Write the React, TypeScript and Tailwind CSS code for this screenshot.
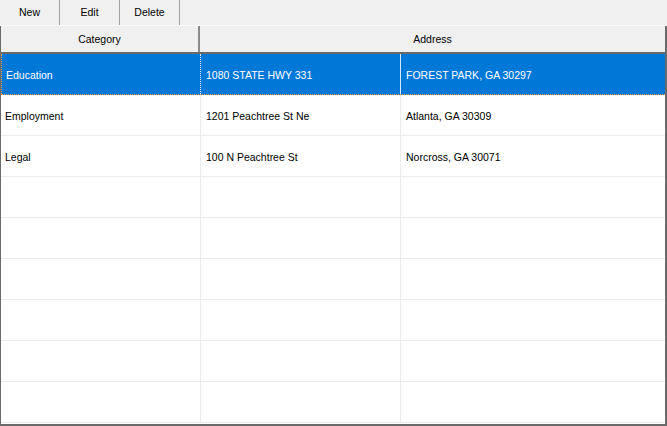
import React from 'react';

const rows = [
  { category: 'Education', street: '1080 STATE HWY 331', city: 'FOREST PARK, GA 30297' },
  { category: 'Employment', street: '1201 Peachtree St Ne', city: 'Atlanta, GA 30309' },
  { category: 'Legal', street: '100 N Peachtree St', city: 'Norcross, GA 30071' },
  null,
  null,
  null,
  null,
  null,
  null,
];

const App = () => {
  return (
    <div
      className="w-[667px] h-[426px] bg-[#f0f0f0] flex flex-col overflow-hidden text-[10.5px] text-black"
      style={{ fontFamily: 'Tahoma, "Liberation Sans", Arial, sans-serif' }}
    >
      <div className="flex h-[26px] shrink-0 border-b border-[#fafafa]">
        {['New', 'Edit', 'Delete'].map((label) => (
          <button
            key={label}
            className="w-[60px] h-full flex items-center justify-center pt-px bg-[#f0f0f0] border-r border-[#a0a0a0]"
          >
            {label}
          </button>
        ))}
      </div>

      <div className="flex-1 flex flex-col border-l border-[#6a6a6a] border-r-2 border-b-2 bg-white">
        <div className="flex h-[28px] shrink-0 bg-[#f0f0f0] border-b-2 border-[#6a6a6a]">
          <div className="w-[199px] flex items-center justify-center pt-px border-r-2 border-[#8a8a8a]">Category</div>
          <div className="flex-1 flex items-center justify-center pt-px">Address</div>
        </div>

        {rows.map((row, i) => {
          const selected = i === 0;
          return (
            <div
              key={i}
              className={
                selected
                  ? 'flex h-[41px] shrink-0 bg-[#0078d7] text-white border-b border-dotted border-[#f0a040]'
                  : 'flex h-[41px] shrink-0 border-b border-[#ececec]'
              }
            >
              <div
                className={
                  'w-[200px] flex items-center pl-1 pt-[3px] border-r ' +
                  (selected ? 'border-[#d8e8f6] border-l border-l-[#f0a040] border-dotted' : 'border-[#ececec]')
                }
              >
                {row?.category}
              </div>
              <div
                className={
                  'w-[200px] flex items-center pl-[5px] pt-[3px] border-r ' +
                  (selected ? 'border-[#d8e8f6]' : 'border-[#ececec]')
                }
              >
                {row?.street}
              </div>
              <div className="flex-1 flex items-center pl-[5px] pt-[3px]">{row?.city}</div>
            </div>
          );
        })}
      </div>
    </div>
  );
};

export default App;
